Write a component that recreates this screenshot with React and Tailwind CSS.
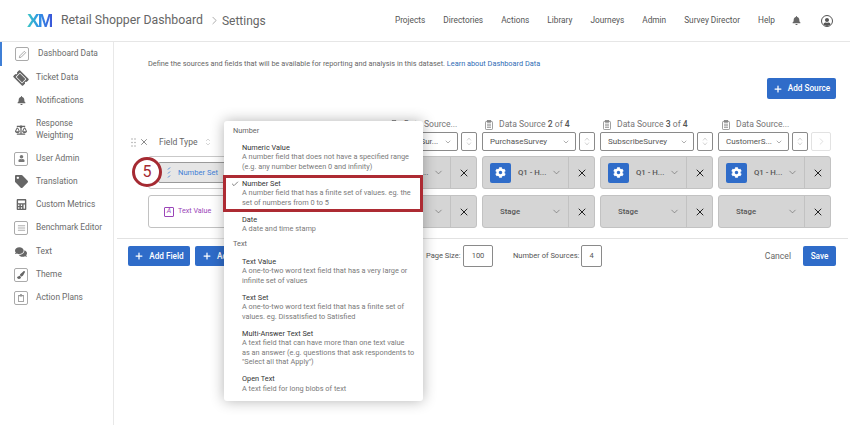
import React from "react";
import { X, ChevronDown, ChevronRight, Plus, Check } from "lucide-react";
import { FaBell, FaTicketAlt, FaBalanceScale, FaTag, FaCalculator, FaComments, FaPaintBrush, FaCog, FaUser, FaRegClipboard } from "react-icons/fa";

const font = { fontFamily: 'Roboto, "Noto Sans", sans-serif' };

function Boxed({ children }) {
  return (
    <span className="w-[14px] h-[14px] border border-[#aaa] rounded-[2px] flex items-center justify-center text-[#666] bg-white">
      {children}
    </span>
  );
}

const PencilIcon = () => (
  <svg width="9" height="9" viewBox="0 0 10 10" fill="none" stroke="#888" strokeWidth="0.8"><path d="M1.5 8.5 L2 6.5 L7 1.5 L8.5 3 L3.5 8 Z" /></svg>
);
const LinesIcon = () => (
  <svg width="9" height="8" viewBox="0 0 10 8" stroke="#999" strokeWidth="0.9"><path d="M1 1.5H9M1 4H9M1 6.5H9" /></svg>
);

const sideItems = [
  { label: "Dashboard Data", icon: <Boxed><PencilIcon /></Boxed>, h: "h-[24px]", first: true },
  { label: "Ticket Data", icon: <FaTicketAlt className="text-[14px] text-[#666] rotate-45" />, h: "h-[23px]" },
  { label: "Notifications", icon: <FaBell className="text-[9px] text-[#666]" />, h: "h-[23px]" },
  { label: "Response Weighting", icon: <FaBalanceScale className="text-[12px] text-[#666]" />, h: "h-[35px]", multi: true },
  { label: "User Admin", icon: <Boxed><FaUser className="text-[7px] text-[#777]" /></Boxed>, h: "h-[23px]" },
  { label: "Translation", icon: <FaTag className="text-[13px] text-[#666]" />, h: "h-[23px]" },
  { label: "Custom Metrics", icon: <FaCalculator className="text-[11px] text-[#666]" />, h: "h-[23px]" },
  { label: "Benchmark Editor", icon: <Boxed><LinesIcon /></Boxed>, h: "h-[24px]" },
  { label: "Text", icon: <FaComments className="text-[12px] text-[#666]" />, h: "h-[23px]" },
  { label: "Theme", icon: <Boxed><FaPaintBrush className="text-[8px] text-[#666]" /></Boxed>, h: "h-[23px]" },
  { label: "Action Plans", icon: <Boxed><FaRegClipboard className="text-[8px] text-[#888]" /></Boxed>, h: "h-[24px]" },
];

const nav = ["Projects", "Directories", "Actions", "Library", "Journeys", "Admin", "Survey Director", "Help"];

function SortBtn() {
  return (
    <span className="w-[16px] h-[19px] border border-[#8a8a8a] rounded-[2px] bg-white flex items-center justify-center shrink-0">
      <svg width="6" height="9" viewBox="0 0 6 9" fill="none" stroke="#ccc" strokeWidth="0.8"><path d="M1 3.5 L3 1 L5 3.5M1 5.5 L3 8 L5 5.5" /></svg>
    </span>
  );
}

function Clip() {
  return (
    <svg width="8" height="10" viewBox="0 0 8 10" fill="none" stroke="#888" strokeWidth="0.8" className="shrink-0">
      <rect x="0.5" y="1.5" width="7" height="8" rx="0.7" /><rect x="2.3" y="0.4" width="3.4" height="1.8" fill="#888" />
      <path d="M2 4.2H6M2 5.8H6M2 7.4H6" />
    </svg>
  );
}

function SourceHead({ n, wide, label, last, headPl = "pl-[3px]", selectPl = "pl-[7px]" }) {
  return (
    <div className="w-[113px] shrink-0">
      <div className={"h-[13px] flex items-center gap-[6px] text-[8.6px] text-[#757575] whitespace-nowrap " + headPl}>
        <Clip />
        {label ? <span>{label}</span> : <span>Data Source <b className="font-medium text-[#555]">{n}</b> of <b className="font-medium text-[#555]">4</b></span>}
      </div>
      <div className="flex mt-[1px] gap-[3px]">
        <span className={(last ? "w-[71px] " : "w-[94px] ") + selectPl + " h-[19px] border border-[#8a8a8a] rounded-[2px] bg-white flex items-center justify-between pr-[5px] text-[8px] text-[#555] shrink-0 whitespace-nowrap"}>
          {wide}
          <ChevronDown size={8} className="text-[#888]" />
        </span>
        <SortBtn />
        {last && (
          <span className="w-[20px] h-[19px] border border-[#e2e2e2] rounded-[2px] flex items-center justify-center shrink-0">
            <ChevronRight size={11} strokeWidth={1} className="text-[#bbb]" />
          </span>
        )}
      </div>
    </div>
  );
}

function GrayCell({ gear, text }) {
  return (
    <div className="w-[113px] h-[33px] shrink-0 bg-[#d5d5d5] border border-[#c2c2c2] rounded-[3px] flex items-center text-[7.8px] font-medium text-[#555]">
      <div className="w-[85px] flex items-center h-full">
        {gear ? (
          <>
            <span className="ml-[7px] w-[21px] h-[20px] bg-[#2f6cc9] rounded-[2px] flex items-center justify-center shrink-0">
              <FaCog className="text-white text-[11px]" />
            </span>
            <span className="ml-[7px] w-[32px] whitespace-nowrap">{text}</span>
          </>
        ) : (
          <span className="ml-[17px] w-[50px] whitespace-nowrap">{text}</span>
        )}
        <ChevronDown size={11} strokeWidth={1.2} className="text-[#555] ml-[1px] shrink-0" />
      </div>
      <div className="flex-1 h-full border-l border-[#c2c2c2] flex items-center justify-center">
        <X size={12} strokeWidth={2} className="text-[#222]" />
      </div>
    </div>
  );
}

function BlueBtn({ children, className = "" }) {
  return (
    <button className={"h-[20px] bg-[#2f6cc9] rounded-[2px] text-white text-[8.2px] font-medium flex items-center justify-center gap-[5px] " + className}>
      {children}
    </button>
  );
}

function MenuItem({ title, lines, checked }) {
  return (
    <div className="relative pl-[18px] pr-[6px] pb-[8.4px] text-[7.35px] leading-[9.2px]">
      {checked && <Check size={8} strokeWidth={2} className="absolute left-[7px] top-[0.5px] text-[#444]" />}
      <div className="text-[#333]">{title}</div>
      {lines.map((l) => (
        <div key={l} className="text-[#7a7a7a] whitespace-nowrap">{l}</div>
      ))}
    </div>
  );
}

export default function App() {
  return (
    <div style={font} className="relative w-[850px] h-[425px] overflow-hidden bg-white flex flex-col">
      <header className="h-[42px] shrink-0 border-b border-[#e6e6e6] flex items-center">
        <span className="ml-[27px] w-[25px] text-[19px] font-bold tracking-[-2px] leading-none text-transparent bg-clip-text bg-gradient-to-r from-[#3fc7c2] via-[#2f8fe6] to-[#3a55d8]" style={{ fontFamily: '"Liberation Sans", sans-serif' }}>XM</span>
        <span className="ml-[9px] text-[12.3px] text-[#666] whitespace-nowrap">Retail Shopper Dashboard</span>
        <ChevronRight size={13} strokeWidth={1} className="ml-[5px] text-[#666]" />
        <span className="ml-[1px] text-[12px] text-[#666]">Settings</span>
        <nav className="ml-auto flex items-center gap-[18px] text-[8.3px] text-[#555] whitespace-nowrap">
          {nav.map((n) => <span key={n}>{n}</span>)}
          <FaBell className="text-[9px] text-[#666] ml-[-1px]" />
          <span className="ml-[2px] mr-[17px] w-[12px] h-[12px] rounded-full border border-[#555] overflow-hidden flex items-end justify-center">
            <FaUser className="text-[8px] text-[#555]" />
          </span>
        </nav>
      </header>

      <div className="flex-1 flex min-h-0">
        <aside className="w-[114px] shrink-0 border-r border-[#e8e8e8] relative">
          <div className="absolute left-0 top-0 w-[2px] h-[24px] bg-[#3f7fd6]" />
          {sideItems.map((it) => (
            <div key={it.label} className={"flex items-center text-[8.4px] leading-[11.5px] text-[#6b6b6b] " + it.h}>
              <span className={"flex items-center justify-center pl-[6px] shrink-0 " + (it.first ? "w-[38px]" : "w-[36px]")}>{it.icon}</span>
              <span className={it.multi ? "w-[50px]" : "whitespace-nowrap"}>{it.label}</span>
            </div>
          ))}
        </aside>

        <main className="flex-1 min-w-0 flex flex-col">
          <p className="pl-[34px] pt-[17px] text-[7.35px] leading-[10px] text-[#666] whitespace-nowrap">
            Define the sources and fields that will be available for reporting and analysis in this dataset. <span className="text-[#2f6cb5]">Learn about Dashboard Data</span>
          </p>
          <div className="flex justify-end pr-[14px] mt-[9px]">
            <BlueBtn className="w-[69px] !h-[21px]"><Plus size={10} strokeWidth={3} />Add Source</BlueBtn>
          </div>

          <div className="flex mt-[19px] h-[33px]">
            <div className="w-[250px] shrink-0 flex items-center pl-[17px] pt-[15px] text-[8.6px] text-[#666]">
              <svg width="6" height="9" viewBox="0 0 6 9" fill="#999" className="shrink-0"><circle cx="1" cy="1" r=".7" /><circle cx="4" cy="1" r=".7" /><circle cx="1" cy="4.5" r=".7" /><circle cx="4" cy="4.5" r=".7" /><circle cx="1" cy="8" r=".7" /><circle cx="4" cy="8" r=".7" /></svg>
              <X size={10} strokeWidth={1.5} className="ml-[2px] text-[#444]" />
              <span className="ml-[10px]">Field Type</span>
              <svg width="6" height="8" viewBox="0 0 6 8" fill="none" stroke="#ccc" strokeWidth="0.8" className="ml-[7px]"><path d="M1 3 L3 1 L5 3M1 5 L3 7 L5 5" /></svg>
            </div>
            <div className="flex gap-[5px]">
              <SourceHead n={1} label="Data Source..." wide="SalesSur..." headPl="pl-[26px]" selectPl="pl-[36px]" />
              <SourceHead n={2} wide="PurchaseSurvey" />
              <SourceHead n={3} wide="SubscribeSurvey" />
              <SourceHead n={4} label="Data Source..." wide="CustomerS..." headPl="pl-[4px]" last />
            </div>
          </div>

          <div className="flex mt-[5px] pl-[34px]">
            <div className="w-[80px] h-[33px] mr-[136px] shrink-0 border border-[#c9c9c9] rounded-[3px] pl-[9px] flex items-center">
              <div className="w-[80px] h-[21px] shrink-0 bg-[#e6e6e6] border border-[#9a9a9a] rounded-[2px] flex items-center pl-[8px] gap-[7px] text-[7.6px] text-[#3f7fd6] whitespace-nowrap">
                <svg width="4" height="11" viewBox="0 0 4 11" stroke="#3f7fd6" strokeWidth="0.9"><path d="M3 0.5 L1 2.5M3 4.5 L1 6.5M3 8.5 L1 10.5" /></svg>
                Number Set
              </div>
            </div>
            <div className="flex gap-[5px]">
              <GrayCell gear text="Q1 - H..." />
              <GrayCell gear text="Q1 - H..." />
              <GrayCell gear text="Q1 - H..." />
              <GrayCell gear text="Q1 - H..." />
            </div>
          </div>

          <div className="flex mt-[6px] pl-[34px]">
            <div className="w-[80px] h-[33px] mr-[136px] shrink-0 border border-[#c2c2c2] rounded-[3px] flex items-center pl-[15px] gap-[4px] text-[7.2px] text-[#9a45b8] whitespace-nowrap">
              <span className="w-[10px] h-[10px] border border-[#9a45b8] rounded-[1px] flex items-center justify-center text-[7px] leading-none italic">A</span>
              Text Value
            </div>
            <div className="flex gap-[5px]">
              <GrayCell text="Stage" />
              <GrayCell text="Stage" />
              <GrayCell text="Stage" />
              <GrayCell text="Stage" />
            </div>
          </div>

          <div className="h-px bg-[#e2e2e2] mt-[10px] ml-[3px] mr-[2px]" />

          <div className="flex items-center mt-[6px] pl-[14px] pr-[14px] text-[7.5px] text-[#555]">
            <BlueBtn className="w-[62px]"><Plus size={10} strokeWidth={3} />Add Field</BlueBtn>
            <BlueBtn className="w-[62px] ml-[5px] !justify-start pl-[7px]"><Plus size={10} strokeWidth={3} />Ad</BlueBtn>
            <span className="w-[33px] ml-[169px] whitespace-nowrap">Page Size:</span>
            <span className="ml-[4px] w-[30px] h-[22px] border border-[#8a8a8a] rounded-[2px] flex items-center justify-center">100</span>
            <span className="w-[64px] ml-[20px] whitespace-nowrap">Number of Sources:</span>
            <span className="ml-[4px] w-[21px] h-[22px] border border-[#8a8a8a] rounded-[2px] flex items-center justify-center">4</span>
            <span className="ml-auto text-[8.6px] text-[#666]">Cancel</span>
            <BlueBtn className="w-[33px] ml-[12px]">Save</BlueBtn>
          </div>
        </main>
      </div>

      {/* dropdown overlay */}
      <div className="absolute left-[224px] top-[121px] w-[199px] h-[280px] bg-white rounded-[3px] shadow-[0_0_14px_rgba(0,0,0,0.3)] pt-[5px]">
        <div className="pl-[9px] text-[7.35px] leading-[9.2px] text-[#666] mb-[8px]">Number</div>
        <MenuItem title="Numeric Value" lines={["A number field that does not have a specified range", "(e.g. any number between 0 and infinity)"]} />
        <MenuItem checked title="Number Set" lines={["A number field that has a finite set of values. eg. the", "set of numbers from 0 to 5"]} />
        <MenuItem title="Date" lines={["A date and time stamp"]} />
        <div className="pl-[9px] text-[7.35px] leading-[9.2px] text-[#666] mt-[-3px] mb-[9px]">Text</div>
        <MenuItem title="Text Value" lines={["A one-to-two word text field that has a very large or", "infinite set of values"]} />
        <MenuItem title="Text Set" lines={["A one-to-two word text field that has a finite set of", "values. eg. Dissatisfied to Satisfied"]} />
        <MenuItem title="Multi-Answer Text Set" lines={["A text field that can have more than one text value", "as an answer (e.g. questions that ask respondents to", "\"Select all that Apply\")"]} />
        <MenuItem title="Open Text" lines={["A text field for long blobs of text"]} />
      </div>

      {/* highlight box */}
      <div className="absolute left-[223px] top-[175px] w-[200px] h-[37px] border-[3px] border-[#ad2b33]" />

      {/* step callout */}
      <div className="absolute left-[132px] top-[157px] w-[30px] h-[30px] rounded-full border-[3px] border-[#a52a32] bg-white flex items-center justify-center text-[16px] text-[#a52a32]">5</div>
    </div>
  );
}
